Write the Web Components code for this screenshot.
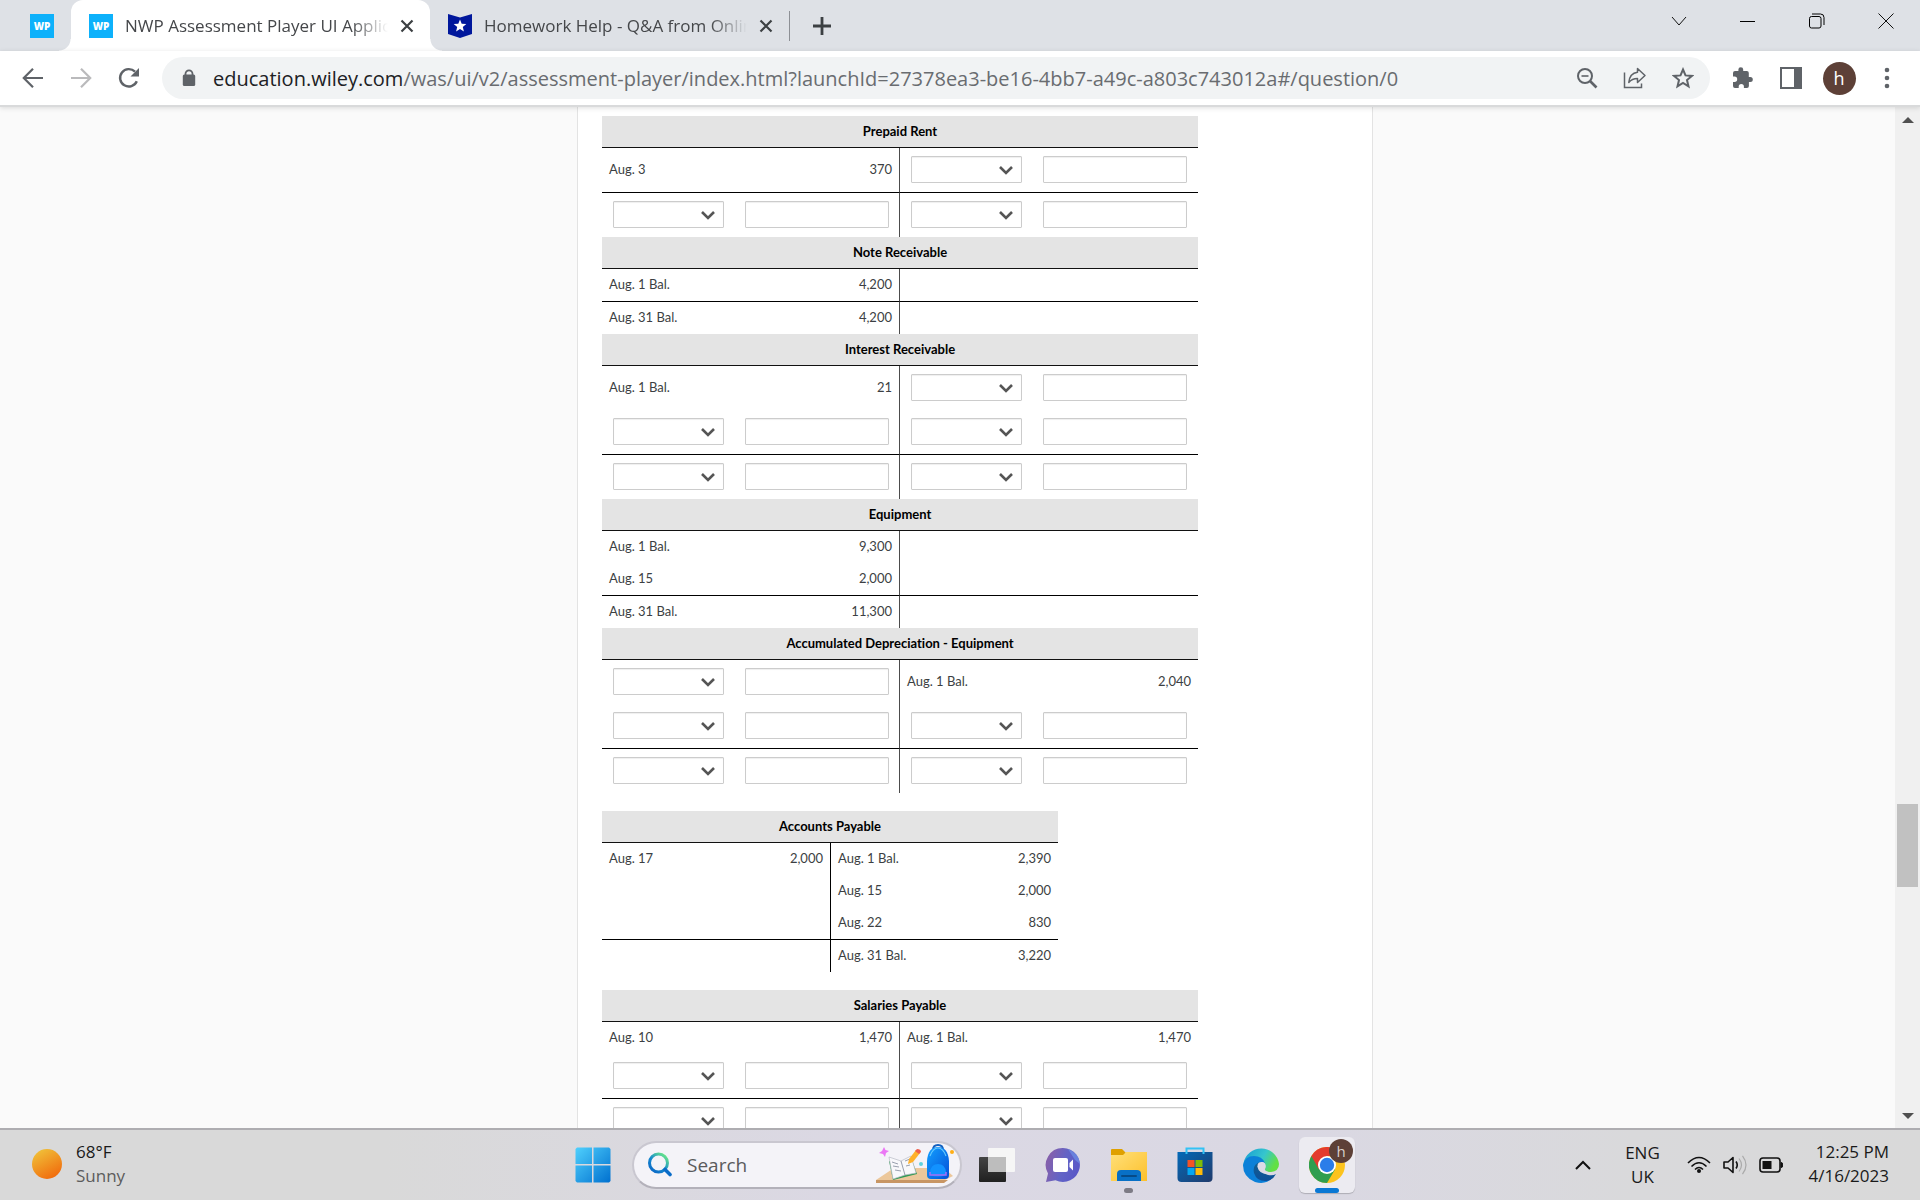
<!DOCTYPE html>
<html lang="en">
<head>
<meta charset="utf-8">
<title>NWP Assessment Player UI Application</title>
<style>
  html, body { height: 100%; }
  body {
    margin: 0;
    display: flex;
    flex-direction: column;
    overflow: hidden;
    font-family: "Open Sans", "Noto Sans", sans-serif;
    background: #fafafa;
  }
</style>
</head>
<body>
<tab-strip>
  <browser-tab icon="wp" pinned></browser-tab>
  <browser-tab icon="wp" active>NWP Assessment Player UI Application</browser-tab>
  <browser-tab icon="bartleby">Homework Help - Q&amp;A from Online Tutors</browser-tab>
</tab-strip>
<nav-bar host="education.wiley.com" path="/was/ui/v2/assessment-player/index.html?launchId=27378ea3-be16-4bb7-a49c-a803c743012a#/question/0"></nav-bar>
<page-view>
  <ledger-list></ledger-list>
</page-view>
<task-bar></task-bar>

<script>
const icons = {
  wp: `<svg width="24" height="24"><rect width="24" height="24" fill="#0db1fb"/><text x="12" y="16" text-anchor="middle" font-family="Open Sans, sans-serif" font-weight="800" font-size="10" fill="#fff">WP</text></svg>`,
  bartleby: `<svg width="24" height="24"><path d="M0 0l12 3.500 12-3.500v20l-12 4-12-4z" fill="#00179c"/><path d="M12 5.500l1.700 4.300 4.600.3-3.500 2.900 1.100 4.600-3.900-2.500-3.900 2.500 1.100-4.600-3.500-2.900 4.600-.3z" fill="#fff"/></svg>`,
  close: `<svg width="14" height="14"><path d="M1.500 1.500l11 11M12.500 1.500l-11 11" stroke="#3c4043" stroke-width="2.200"/></svg>`,
  plus: `<svg width="20" height="20"><path d="M1 10h18M10 1v18" stroke="#3c4043" stroke-width="2.800"/></svg>`,
  winDown: `<svg width="16" height="16"><path d="M1 4l7 8 7-8" fill="none" stroke="#111"/></svg>`,
  winMin: `<svg width="16" height="16"><path d="M0 8.500h15" stroke="#000"/></svg>`,
  winMax: `<svg width="16" height="16" fill="none" stroke="#000"><rect x=".5" y="3.500" width="11.500" height="11.500" rx="2"/><path d="M3 1h8.500q3.500 0 3.500 3.500V12"/></svg>`,
  winClose: `<svg width="16" height="16"><path d="M.5.5l15 15M15.500.5l-15 15" stroke="#111"/></svg>`,
  back: `<svg width="22" height="22" fill="none" stroke="#5f6368" stroke-width="2.200"><path d="M21 11H2.500M11 1.800L1.800 11l9.200 9.200"/></svg>`,
  forward: `<svg width="22" height="22" fill="none" stroke="#bababc" stroke-width="2.200"><path d="M1 11h18.500M11 1.800l9.200 9.200-9.200 9.200"/></svg>`,
  reload: `<svg width="22" height="22"><path d="M18.800 14.300A8.700 8.700 0 1 1 17 4.700" fill="none" stroke="#5f6368" stroke-width="2.400"/><path d="M21 1v8.500h-8.500z" fill="#5f6368"/></svg>`,
  lock: `<svg width="14" height="18"><path d="M3.500 8V4.800a3.500 3.500 0 0 1 7 0V8" fill="none" stroke="#5f6368" stroke-width="1.800"/><rect x=".8" y="5.500" width="12.400" height="11.500" rx="1.500" fill="#5f6368"/></svg>`,
  zoomOut: `<svg width="22" height="22" fill="none" stroke="#5f6368" stroke-width="2"><circle cx="9" cy="9" r="7"/><path d="M5.500 9h7" stroke-width="1.600"/><path d="M14 14l6.500 6.500" stroke-width="2.600"/></svg>`,
  share: `<svg width="24" height="24" fill="none" stroke="#5f6368" stroke-width="1.500"><path d="M1.500 6.500v15h17v-4"/><path d="M14.500 2.500l7.500 7-7.500 7v-4c-4 0-6.500 1.200-8.700 4C6.300 11.200 9 7 14.500 6.300z" stroke-linejoin="round"/></svg>`,
  star: `<svg width="22" height="22"><path d="M11 2.500l2.500 5.900 6.400.5-4.900 4.200 1.500 6.300-5.500-3.400-5.500 3.400L7 13.100 2.100 8.900l6.400-.5z" fill="none" stroke="#5f6368" stroke-width="2"/></svg>`,
  puzzle: `<svg width="22" height="22"><path d="M18.300 10h-1.500V6a2 2 0 0 0-2-2h-3.600V2.600a2.400 2.400 0 0 0-4.800 0V4H3a2 2 0 0 0-2 2v3.600h1.500a2.700 2.700 0 0 1 0 5.400H1v4a2 2 0 0 0 2 2h3.700v-1.500a2.600 2.600 0 0 1 5.200 0V21h3a2 2 0 0 0 2-2v-4h1.400a2.500 2.500 0 0 0 0-5z" fill="#5f6368"/></svg>`,
  panel: `<svg width="22" height="22"><rect x="1" y="1" width="20" height="20" fill="none" stroke="#5f6368" stroke-width="2"/><path d="M14 1h7v20h-7z" fill="#5f6368"/></svg>`,
  dots: `<svg width="6" height="22" fill="#5f6368"><circle cx="3" cy="3" r="2.300"/><circle cx="3" cy="11" r="2.300"/><circle cx="3" cy="19" r="2.300"/></svg>`,
  chevron: `<svg width="16" height="12"><path d="M2 3l6 6 6-6" fill="none" stroke="#555" stroke-width="2.600"/></svg>`,
  sun: `<svg width="30" height="30"><defs><linearGradient id="sun" x1=".2" y1=".1" x2=".7" y2="1"><stop stop-color="#f0bb36"/><stop offset="1" stop-color="#f16a0c"/></linearGradient></defs><circle cx="15" cy="15" r="15" fill="url(#sun)"/></svg>`,
  start: `<svg width="36" height="36"><defs><linearGradient id="win" x2="1" y2="1"><stop stop-color="#4fd0fd"/><stop offset="1" stop-color="#0070cf"/></linearGradient></defs><path d="M2 .5h15v16.500H.5V2zM18.500.5H34l1.500 1.500v15h-17zM.5 18.500H17v17H2L.5 34zM18.500 18.500h17V34L34 35.500H18.500z" fill="url(#win)"/></svg>`,
  search: `<svg width="24" height="26"><defs><linearGradient id="lens" x1="0" y1="1" x2=".8" y2="0"><stop stop-color="#0a62c4"/><stop offset=".5" stop-color="#1489cf"/><stop offset="1" stop-color="#67e58a"/></linearGradient></defs><circle cx="10.500" cy="11" r="9" fill="none" stroke="url(#lens)" stroke-width="3"/><path d="M17 17.500l5 5" stroke="#0a6cc8" stroke-width="3.600" stroke-linecap="round"/></svg>`,
  school: `<svg width="80" height="42"><defs><linearGradient id="bag" x2="1" y2="1"><stop stop-color="#12a0ff"/><stop offset="1" stop-color="#0550d8"/></linearGradient></defs><path d="M0 36l18-12h50l9 8-8 4z" fill="#ecc79b"/><path d="M0 36h72l-4 3H0z" fill="#c89664"/><path d="M13 17l11 4 12-5 5 14-24 6z" fill="#2f9a55"/><path d="M13 13l12 4 10-5 5 17-11 2-12 4z" fill="#f8f8fb" stroke="#b9bcc5" stroke-width=".7"/><path d="M25 17l4 14M16 18l6 2M17 22l6 1M19 26l6 1M29 17l5-2M30 22l4-1" stroke="#999fae" stroke-width="1"/><path d="M32 20l1-5 7-9 4 3-7 9z" fill="#ffb12a"/><path d="M39 7l2-2q4 0 4 3l-2 2z" fill="#ee604d"/><path d="M8 3l1.500 3L13 7l-3 2-1 4-2-3-4-1 3-2z" fill="#eb77f5"/><circle cx="45" cy="20" r="2" fill="#60d2df"/><circle cx="76" cy="8" r="2" fill="#ffaf16"/><path d="M57 6q0-5 5-5t5 5" fill="none" stroke="#1261c0" stroke-width="2"/><path d="M51 17Q52 3 62 3t11 14v14q0 4-4 4H55q-4 0-4-4z" fill="url(#bag)"/><path d="M54 12q3-8 8-8t8 8" fill="none" stroke="#64c9ff" stroke-width="1.200"/><path d="M54 28q1-8 8-8t8 8v3q-8 3-16 0z" fill="#1292ff"/><path d="M54 28v3h16v-3" fill="none" stroke="#a46df5" stroke-width="1.500"/></svg>`,
  taskView: `<svg width="36" height="36"><defs><linearGradient id="tv" x2="0" y2="1"><stop stop-color="#444"/><stop offset="1" stop-color="#202020"/></linearGradient></defs><rect y="10" width="27" height="25" rx="1" fill="url(#tv)"/><rect x="9" y="1" width="27" height="24" rx="1" fill="#f6f6f6"/><path d="M9 10h18v15H9z" fill="#bdbdbd"/></svg>`,
  chat: `<svg width="36" height="36"><defs><linearGradient id="ch" x1=".1" y1=".3" x2="1" y2=".6"><stop stop-color="#8360ad"/><stop offset=".5" stop-color="#6264c6"/><stop offset="1" stop-color="#5957c7"/></linearGradient></defs><path d="M18 1a17 17 0 1 1-7.500 32.300L1 35l2-8.500A17 17 0 0 1 18 1z" fill="url(#ch)"/><path d="M23 2q11 4 12 15l-5-4z" fill="#6c8be2" opacity=".8"/><rect x="8" y="11" width="15" height="14" rx="2" fill="#fff"/><path d="M24.500 16l3.500-3.500v11L24.500 20z" fill="#fff"/></svg>`,
  explorer: `<svg width="36" height="36"><defs><linearGradient id="ex" x2="1" y2="1"><stop stop-color="#ffe07a"/><stop offset="1" stop-color="#fdc02b"/></linearGradient></defs><path d="M0 3q0-1 1-1h10l4 4h19v5H0z" fill="#dfa000"/><path d="M0 8h12l3-3h21v29H0z" fill="url(#ex)"/><path d="M6 34V27q0-4 4-4h16q4 0 4 4v7z" fill="#0870c6"/><path d="M11 29h14" stroke="#064b88" stroke-width="2" stroke-linecap="round"/></svg>`,
  store: `<svg width="36" height="36"><defs><linearGradient id="st" x2="1" y2="1"><stop stop-color="#046ab8"/><stop offset="1" stop-color="#203a6b"/></linearGradient></defs><path d="M.5 5h35v26q0 4-4 4h-27q-4 0-4-4z" fill="url(#st)"/><path d="M9.500 7V1.500h17V7" fill="none" stroke="#33c2f5" stroke-width="2"/><path d="M10.500 13h7v7h-7z" fill="#f35325"/><path d="M18.500 13h7v7h-7z" fill="#81bc06"/><path d="M10.500 21h7v7h-7z" fill="#05a6f0"/><path d="M18.500 21h7v7h-7z" fill="#ffba08"/></svg>`,
  edge: `<svg width="36" height="36"><defs><linearGradient id="e1" x2="1" y2=".4"><stop stop-color="#169bd5"/><stop offset=".6" stop-color="#36c6cd"/><stop offset="1" stop-color="#62e044"/></linearGradient><linearGradient id="e2" x2="0" y2="1"><stop stop-color="#12608f"/><stop offset="1" stop-color="#0d4f9a"/></linearGradient></defs><path d="M.5 16A18 18 0 0 1 36 17q0 7-8 8-5 0-6.500-2 2-3 .5-6-2-4-7-4Q3 13 .5 20z" fill="url(#e1)"/><path d="M0 18q2-9 11-9 8 0 11 7l-3-1q-9 4-3 14 5 5 13 2-6 7-17 4Q0 30 0 18z" fill="#0b80d8"/><path d="M18 15q-9 2-7 11 3 9 13 8 6-1 9-7-3 2-8 1-9-2-7-13z" fill="url(#e2)"/><circle cx="18.500" cy="19" r="4" fill="#dddbe6"/><path d="M14.500 19q1 8 10 8 5 0 8-2.500-3 2-8.500 0-3-1-2.500-4z" fill="#dddbe6"/></svg>`,
  chrome: `<svg width="36" height="36"><circle cx="18" cy="18" r="18" fill="#fcc31e"/><path d="M18 18L2.400 9A18 18 0 0 0 18 36l8-13.500z" fill="#2f9e4f"/><path d="M2.400 9A18 18 0 0 1 33.600 9H18l-8 13.500z" fill="#e33b2e"/><circle cx="18" cy="18" r="9" fill="#fff"/><circle cx="18" cy="18" r="7.200" fill="#2b7de9"/></svg>`,
  trayUp: `<svg width="18" height="12"><path d="M2 10l7-7 7 7" fill="none" stroke="#111" stroke-width="2"/></svg>`,
  wifi: `<svg width="24" height="18" fill="none" stroke="#111" stroke-width="1.600"><path d="M1 7Q12-4 23 7M4.500 10.500q7.500-7.500 15 0M8 13.500q4-4 8 0"/><circle cx="12" cy="15" r="2" fill="#111" stroke="none"/></svg>`,
  speaker: `<svg width="24" height="20" fill="none" stroke="#111" stroke-width="1.600"><path d="M1 7v6h4l5 4.500v-15L5 7z" stroke-linejoin="round"/><path d="M13 6.500q2.500 3.500 0 7"/><path d="M16 3.500q5 6.500 0 13M19.500.8q7 9.200 0 18.400" stroke="#aaa" stroke-width="1.200"/></svg>`,
  battery: `<svg width="24" height="16"><rect x="1" y="1" width="20" height="14" rx="3" fill="none" stroke="#111" stroke-width="1.600"/><path d="M3.500 4h9v8h-9z" fill="#111"/><path d="M22 5.500q2 0 2 2.500t-2 2.500z" fill="#111" stroke="#111"/></svg>`
}

const resetButton = /* css */`
  button {
    display: grid;
    place-items: center;
    border: 0;
    padding: 0;
    background: none;
    color: inherit;
    font: inherit;
  }
  svg { display: block; }
`

class BrowserTab extends HTMLElement {
  connectedCallback () {
    this.shadow = this.attachShadow({ mode: 'open' })
    const pinned = this.hasAttribute('pinned')
    this.shadow.innerHTML =
    /* html */`
    <style>
      ${resetButton}
      :host {
        display: flex;
        align-items: center;
        box-sizing: border-box;
        position: relative;
        width: 359px;
        height: 51px;
        padding: 0 16px 0 18px;
        gap: 12px;
        font-size: 17px;
        color: #45474a;
      }
      :host([pinned]) { width: 71px; padding-left: 30px; }
      :host([active]) { background: #fff; border-radius: 12px 12px 0 0; }
      :host([active])::before, :host([active])::after {
        content: "";
        position: absolute;
        bottom: 0;
        width: 12px;
        height: 12px;
      }
      :host([active])::before { right: 100%; background: radial-gradient(circle at 0 0, transparent 11px, #fff 12px); }
      :host([active])::after { left: 100%; background: radial-gradient(circle at 100% 0, transparent 11px, #fff 12px); }
      .title {
        flex: 1;
        overflow: hidden;
        white-space: nowrap;
        line-height: 24px;
        -webkit-mask-image: linear-gradient(90deg, #000 86%, transparent);
        mask-image: linear-gradient(90deg, #000 86%, transparent);
      }
    </style>
    ${icons[this.getAttribute('icon')]}
    ${pinned ? '' : `<span class="title"><slot></slot></span><button aria-label="Close tab">${icons.close}</button>`}
    `
  }
}

class TabStrip extends HTMLElement {
  connectedCallback () {
    this.shadow = this.attachShadow({ mode: 'open' })
    this.shadow.innerHTML =
    /* html */`
    <style>
      ${resetButton}
      :host { display: flex; background: #dee1e6; height: 51px; flex: none; }
      .new-tab { border-left: 1px solid #8d9095; height: 30px; padding-left: 22px; margin-top: 11px; }
      .window { display: flex; margin-left: auto; height: 42px; }
      .window button { width: 69px; }
    </style>
    <slot></slot>
    <button class="new-tab" aria-label="New tab">${icons.plus}</button>
    <div class="window">
      <button aria-label="Search tabs">${icons.winDown}</button>
      <button aria-label="Minimise">${icons.winMin}</button>
      <button aria-label="Restore">${icons.winMax}</button>
      <button aria-label="Close">${icons.winClose}</button>
    </div>
    `
  }
}

class NavBar extends HTMLElement {
  connectedCallback () {
    this.shadow = this.attachShadow({ mode: 'open' })
    this.shadow.innerHTML =
    /* html */`
    <style>
      ${resetButton}
      :host {
        display: flex;
        align-items: center;
        flex: none;
        height: 54px;
        padding-left: 9px;
        padding-right: 9px;
        background: #fff;
        border-bottom: 2px solid #d9dadb;
        box-shadow: 0 1px 5px #0002;
        z-index: 1;
      }
      button { width: 48px; height: 42px; }
      .address {
        display: flex;
        align-items: center;
        flex: 1;
        min-width: 0;
        height: 42px;
        margin: 0 9px;
        padding-left: 20px;
        padding-right: 3px;
        border-radius: 21px;
        background: #f1f3f4;
      }
      .url {
        flex: 1;
        min-width: 0;
        margin-left: 17px;
        padding-top: 2px;
        font-size: 20px;
        line-height: 28px;
        white-space: nowrap;
        overflow: hidden;
        color: #696c70;
      }
      .host { color: #202124; }
      .avatar {
        display: block;
        width: 33px;
        line-height: 33px;
        border-radius: 50%;
        background: #5d4037;
        color: #fff;
        text-align: center;
        font-size: 18px;
      }
    </style>
    <button aria-label="Back">${icons.back}</button>
    <button aria-label="Forward">${icons.forward}</button>
    <button aria-label="Reload">${icons.reload}</button>
    <div class="address">
      ${icons.lock}
      <span class="url"><span class="host">${this.getAttribute('host')}</span>${this.getAttribute('path')}</span>
      <button aria-label="Zoom">${icons.zoomOut}</button>
      <button aria-label="Share">${icons.share}</button>
      <button aria-label="Bookmark">${icons.star}</button>
    </div>
    <button aria-label="Extensions">${icons.puzzle}</button>
    <button aria-label="Side panel">${icons.panel}</button>
    <button aria-label="Profile"><span class="avatar">h</span></button>
    <button aria-label="Menu">${icons.dots}</button>
    `
  }
}

class PageView extends HTMLElement {
  connectedCallback () {
    this.shadow = this.attachShadow({ mode: 'open' })
    this.shadow.innerHTML =
    /* html */`
    <style>
      :host { display: flex; flex: 1; min-height: 0; overflow: hidden; background: #fafafa; }
      .page { display: grid; grid-template-columns: 577fr 796px 522fr; flex: 1; }
      .sheet {
        grid-column: 2;
        box-sizing: border-box;
        min-height: 0;
        overflow: hidden;
        padding: 9px 24px 0;
        background: #fff;
        border: solid #e3e3e3;
        border-width: 0 1px;
      }
      .scroll {
        display: grid;
        grid-template-rows: 26px 671fr 83px 217fr 24px;
        justify-items: center;
        align-items: center;
        width: 25px;
        background: #f0f0f0;
      }
      .thumb { grid-row: 3; width: 21px; height: 100%; background: #c1c1c1; }
      .up, .down { border: solid transparent; border-width: 0 6px; }
      .up { grid-row: 1; border-bottom: 6px solid #505050; }
      .down { grid-row: 5; border-top: 6px solid #505050; }
    </style>
    <div class="page"><div class="sheet"><slot></slot></div></div>
    <div class="scroll"><i class="up"></i><i class="thumb"></i><i class="down"></i></div>
    `
  }
}

// '?' is an answer box; a row starting with '=' is the balance row under the rule
const accounts = [
  { name: 'Prepaid Rent', rows: [['Aug. 3', '370', '?', '?'], ['=', '?', '?', '?', '?']] },
  { name: 'Note Receivable', rows: [['Aug. 1 Bal.', '4,200', '', ''], ['=', 'Aug. 31 Bal.', '4,200', '', '']] },
  { name: 'Interest Receivable', rows: [['Aug. 1 Bal.', '21', '?', '?'], ['?', '?', '?', '?'], ['=', '?', '?', '?', '?']] },
  { name: 'Equipment', rows: [['Aug. 1 Bal.', '9,300', '', ''], ['Aug. 15', '2,000', '', ''], ['=', 'Aug. 31 Bal.', '11,300', '', '']] },
  { name: 'Accumulated Depreciation - Equipment', rows: [['?', '?', 'Aug. 1 Bal.', '2,040'], ['?', '?', '?', '?'], ['=', '?', '?', '?', '?']] },
  { name: 'Accounts Payable', gap: true, narrow: true, rows: [['Aug. 17', '2,000', 'Aug. 1 Bal.', '2,390'], ['', '', 'Aug. 15', '2,000'], ['', '', 'Aug. 22', '830'], ['=', '', '', 'Aug. 31 Bal.', '3,220']] },
  { name: 'Salaries Payable', gap: true, rows: [['Aug. 10', '1,470', 'Aug. 1 Bal.', '1,470'], ['?', '?', '?', '?'], ['=', '?', '?', '?', '?']] }
]

class LedgerAccount extends HTMLElement {
  connectedCallback () {
    this.shadow = this.attachShadow({ mode: 'open' })
    this.render()
  }

  renderCell (value, column, row) {
    const side = column < 2 ? 'debit' : 'credit'
    const label = `${this.account.name}, ${side} line ${row + 1}`
    if (value !== '?') return `<td>${value}</td>`
    if (column % 2) return `<td class="answer"><input type="text" aria-label="${label} amount"></td>`
    return `<td class="answer"><span class="pick"><select aria-label="${label} date"><option></option></select>${icons.chevron}</span></td>`
  }

  render () {
    const { name, rows, narrow } = this.account
    const widths = narrow ? [105, 123, 104, 124] : [132, 165, 133, 166]
    const body = rows.map((cells, row) => {
      const total = cells[0] === '='
      const values = total ? cells.slice(1) : cells
      return `<tr class="${total ? 'total' : ''} ${cells.includes('?') ? 'tall' : ''}">
        ${values.map((value, column) => this.renderCell(value, column, row)).join('')}
      </tr>`
    }).join('')

    this.shadow.innerHTML =
    /* html */`
    <style>
      :host {
        display: block;
        font-family: Lato, sans-serif;
        font-size: 13px;
        font-variant-ligatures: none;
        line-height: 18px;
        --divider: #4c4c4c;
      }
      :host([gap]) { margin-top: 18px; }
      :host([narrow]) { --divider: #000; }
      table { border-collapse: separate; border-spacing: 0; table-layout: fixed; width: ${widths.reduce((a, b) => a + b)}px; }
      th, td { box-sizing: border-box; }
      th { height: 32px; padding: 0 0 2px; background: #e4e4e4; border-bottom: 1px solid #111; color: #000; font-weight: 700; }
      td { height: 32px; padding: 0 7px 2px; color: #3c3f43; }
      td:nth-child(even) { text-align: right; }
      td:nth-child(3) { border-left: 1px solid var(--divider); }
      .tall td { height: 44px; }
      .total td { height: 33px; border-top: 1px solid #000; }
      .total.tall td { height: 45px; }
      td.answer { padding: 0 0 1px 11px; text-align: left; }
      select, input {
        display: block;
        box-sizing: border-box;
        height: 27px;
        margin: 0;
        border: 1px solid #ccc;
        border-radius: 1px;
        background: #fff;
        font: inherit;
        padding: 0 7px;
        box-shadow: inset 0 1px 1px #0001;
      }
      input { width: 144px; }
      .pick { display: grid; width: 111px; align-items: center; }
      .pick > * { grid-area: 1 / 1; }
      select { width: 100%; appearance: none; }
      svg { justify-self: end; margin-right: 8px; pointer-events: none; }
    </style>
    <table>
      <colgroup>${widths.map(width => `<col style="width: ${width}px">`).join('')}</colgroup>
      <thead><tr><th colspan="4">${name}</th></tr></thead>
      <tbody>${body}</tbody>
    </table>
    `
  }
}

class LedgerList extends HTMLElement {
  connectedCallback () {
    this.shadow = this.attachShadow({ mode: 'open' })
    this.shadow.innerHTML = '<style>:host { display: flex; flex-direction: column; }</style>'
    accounts.forEach(account => {
      const ledgerAccount = document.createElement('ledger-account')
      ledgerAccount.account = account
      ledgerAccount.toggleAttribute('gap', Boolean(account.gap))
      ledgerAccount.toggleAttribute('narrow', Boolean(account.narrow))
      this.shadow.appendChild(ledgerAccount)
    })
  }
}

class TaskBar extends HTMLElement {
  connectedCallback () {
    this.shadow = this.attachShadow({ mode: 'open' })
    this.shadow.innerHTML =
    /* html */`
    <style>
      ${resetButton}
      :host {
        display: grid;
        grid-template-columns: 1fr auto 1fr;
        align-items: center;
        flex: none;
        height: 70px;
        border-top: 2px solid #aeadb1;
        background: linear-gradient(90deg, #d9d9d9 20%, #dbd8e4 45%, #dad8e3 68%, #d9d9db 85%, #d9d9d9);
        font-size: 17px;
        line-height: 24px;
        color: #1a1a1a;
      }
      .weather { display: flex; align-items: center; gap: 14px; padding-left: 32px; padding-bottom: 2px; }
      .weather small { display: block; font-size: 17px; color: #5c5c5c; }
      .apps { display: flex; align-items: center; height: 100%; }
      .apps button { position: relative; width: 66px; height: 100%; }
      .search {
        display: flex;
        align-items: center;
        box-sizing: border-box;
        width: 330px;
        height: 48px;
        margin: 0 2px 0 6px;
        padding: 0 4px 0 14px;
        border: 2px solid #c9c7d0;
        border-bottom-color: #b3b1ba;
        border-radius: 24px;
        background: #f4f3f8;
      }
      .search input {
        flex: 1;
        min-width: 0;
        margin-left: 15px;
        padding: 0;
        border: 0;
        background: none;
        font: 19px/26px "Open Sans", sans-serif;
      }
      .search input::placeholder { color: #5a5a5c; opacity: 1; }
      .tile { display: grid; place-items: center; width: 56px; height: 56px; border-radius: 6px; }
      .current .tile { background: #ecebf1; box-shadow: 0 1px 1px #0003; }
      .badge {
        position: absolute;
        top: 9px;
        right: 7px;
        width: 24px;
        line-height: 24px;
        border-radius: 50%;
        background: #5d4037;
        color: #d8cfcb;
        font-size: 15px;
      }
      .running::after, .current::after {
        content: "";
        position: absolute;
        bottom: 7px;
        left: 50%;
        width: 9px;
        height: 5px;
        margin-left: -5px;
        border-radius: 3px;
        background: #7d7b85;
      }
      .current::after { width: 24px; margin-left: -12px; background: #0a78d4; }
      .tray { display: flex; align-items: center; justify-content: flex-end; gap: 12px; padding-right: 31px; }
      .language { width: 36px; margin: 0 15px 0 20px; text-align: center; }
      .clock { margin-left: 13px; text-align: right; padding-bottom: 2px; }
    </style>
    <div class="weather">${icons.sun}<div>68°F<small>Sunny</small></div></div>
    <div class="apps">
      <button aria-label="Start">${icons.start}</button>
      <label class="search">${icons.search}<input type="text" placeholder="Search" aria-label="Search">${icons.school}</label>
      <button aria-label="Task view">${icons.taskView}</button>
      <button aria-label="Chat">${icons.chat}</button>
      <button class="running" aria-label="File Explorer">${icons.explorer}</button>
      <button aria-label="Microsoft Store">${icons.store}</button>
      <button aria-label="Microsoft Edge">${icons.edge}</button>
      <button class="current" aria-label="Google Chrome"><span class="tile">${icons.chrome}</span><span class="badge">h</span></button>
    </div>
    <div class="tray">
      <button aria-label="Hidden icons">${icons.trayUp}</button>
      <div class="language">ENG<br>UK</div>
      ${icons.wifi}${icons.speaker}${icons.battery}
      <div class="clock">12:25 PM<br>4/16/2023</div>
    </div>
    `
  }
}

customElements.define('browser-tab', BrowserTab)
customElements.define('tab-strip', TabStrip)
customElements.define('nav-bar', NavBar)
customElements.define('page-view', PageView)
customElements.define('ledger-account', LedgerAccount)
customElements.define('ledger-list', LedgerList)
customElements.define('task-bar', TaskBar)
</script>
</body>
</html>
